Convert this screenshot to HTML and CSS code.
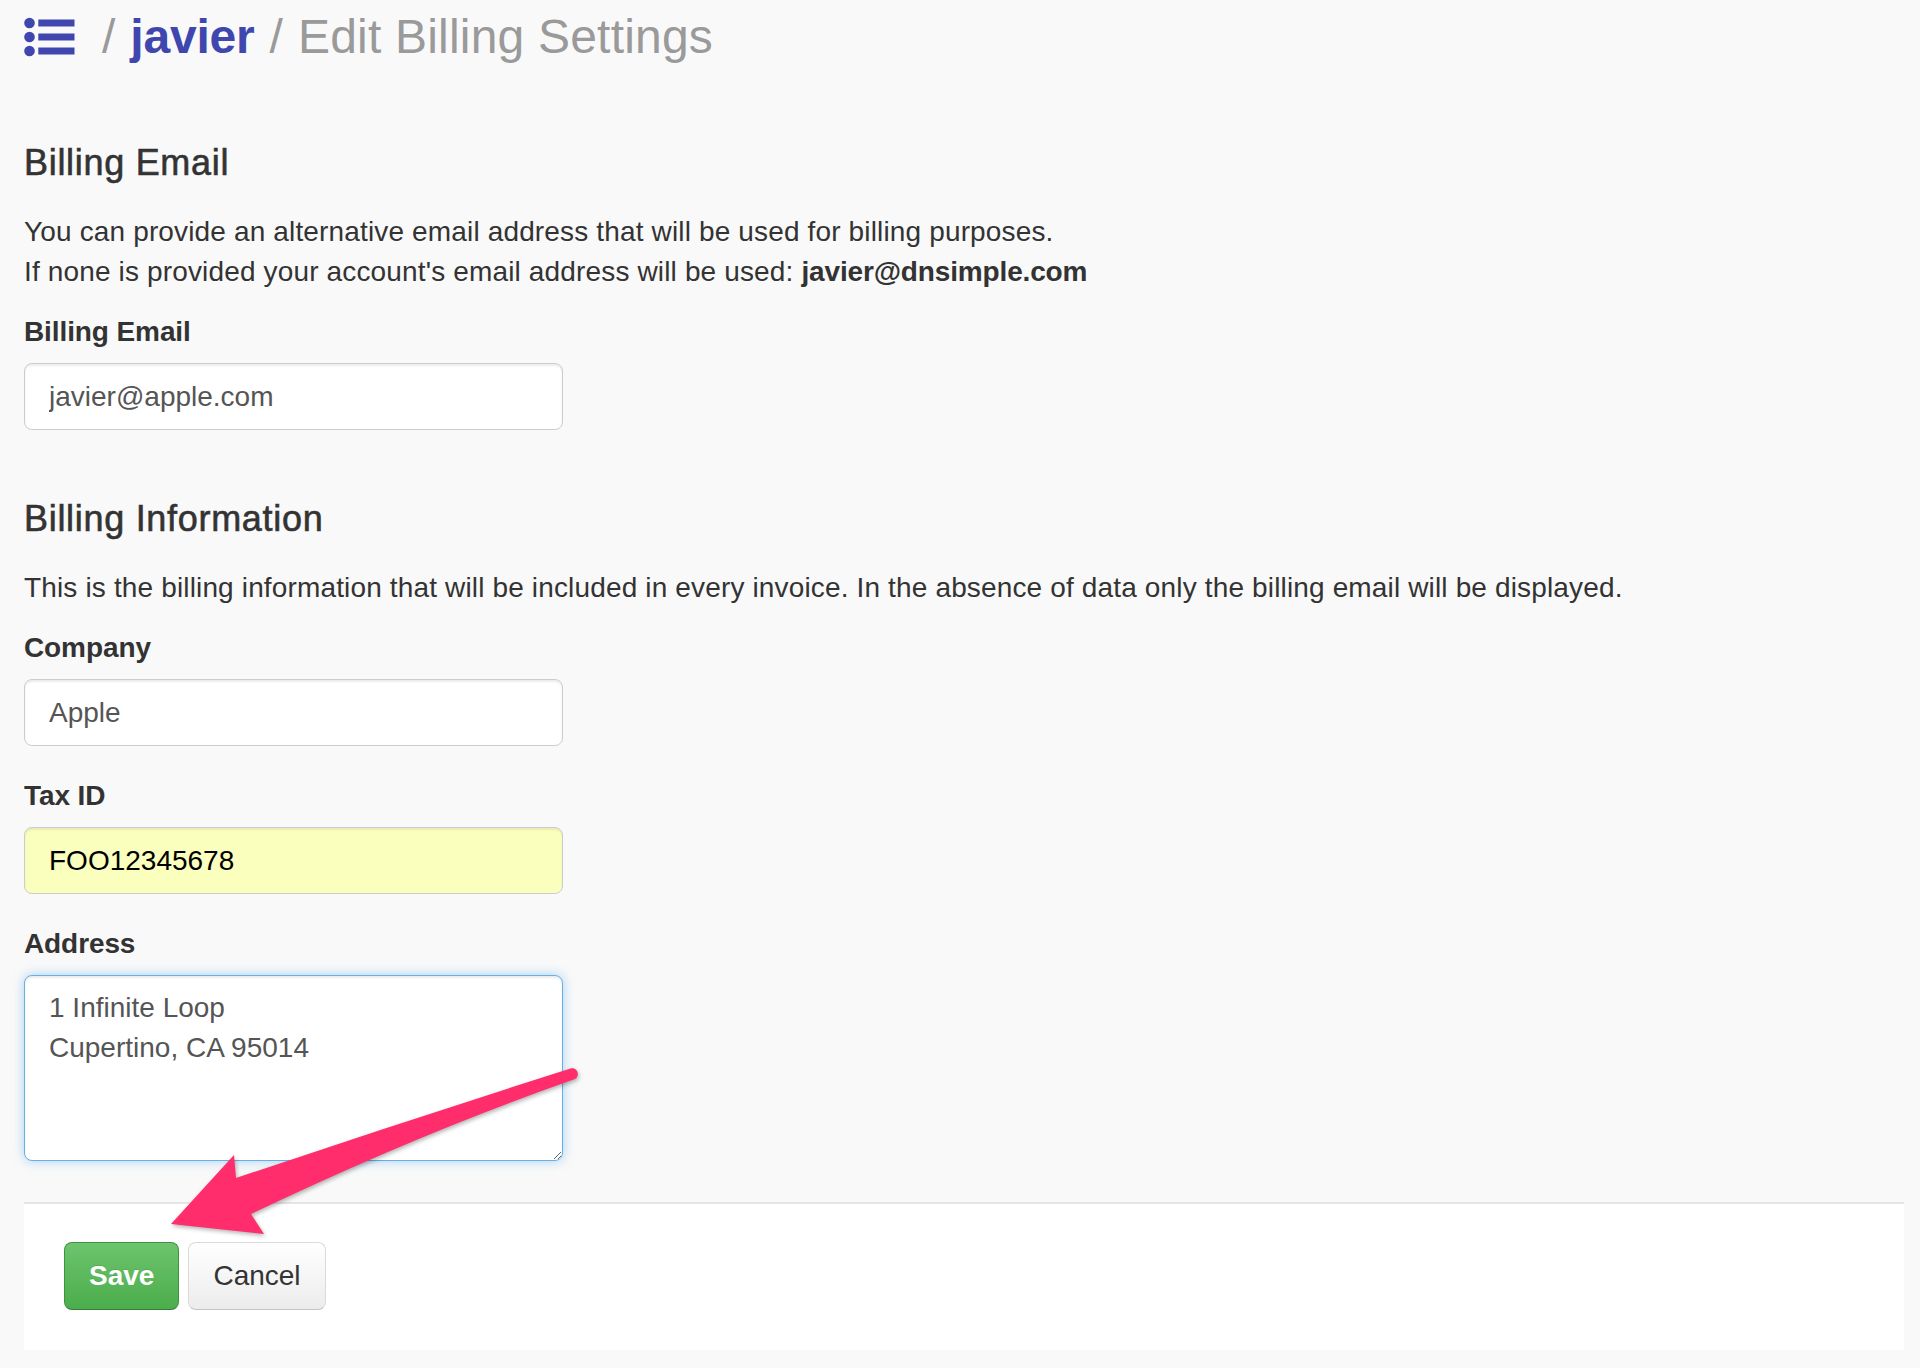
FILE: index.html
```html
<!DOCTYPE html>
<html lang="en">
<head>
<meta charset="utf-8">
<title>Edit Billing Settings</title>
<link rel="stylesheet" href="styles.css">
</head>
<body>
<div class="page">
  <header class="page-title">
    <svg class="list-icon" width="51" height="40" viewBox="0 0 51 40" aria-hidden="true">
      <circle cx="5.5" cy="6" r="5.3"/>
      <circle cx="5.5" cy="20" r="5.3"/>
      <circle cx="5.5" cy="34" r="5.3"/>
      <rect x="14.3" y="2.5" width="36.2" height="7"/>
      <rect x="14.3" y="16.5" width="36.2" height="7"/>
      <rect x="14.3" y="30.5" width="36.2" height="7"/>
    </svg>
    <span class="sep">/</span>
    <a class="crumb" href="#">javier</a>
    <span class="sep">/</span>
    <span class="current">Edit Billing Settings</span>
  </header>

  <form class="settings-form">
    <section class="section">
      <h3 class="section-title">Billing Email</h3>
      <p class="section-text">You can provide an alternative email address that will be used for billing purposes.<br>If none is provided your account's email address will be used: <strong class="account-email">javier@dnsimple.com</strong></p>
      <div class="form-group">
        <label class="form-label" for="billing-email">Billing Email</label>
        <input class="form-control" id="billing-email" type="text" value="javier@apple.com">
      </div>
    </section>

    <section class="section">
      <h3 class="section-title">Billing Information</h3>
      <p class="section-text">This is the billing information that will be included in every invoice. In the absence of data only the billing email will be displayed.</p>
      <div class="form-group">
        <label class="form-label" for="company">Company</label>
        <input class="form-control" id="company" type="text" value="Apple">
      </div>
      <div class="form-group">
        <label class="form-label" for="tax-id">Tax ID</label>
        <input class="form-control autofilled" id="tax-id" type="text" value="FOO12345678">
      </div>
      <div class="form-group last">
        <label class="form-label" for="address">Address</label>
        <textarea class="form-control textarea focused" id="address">1 Infinite Loop
Cupertino, CA 95014</textarea>
      </div>
    </section>

    <div class="form-actions">
      <button type="button" class="btn btn-success">Save</button>
      <button type="button" class="btn btn-default">Cancel</button>
    </div>
  </form>

  <svg class="annotation" width="1920" height="1368" viewBox="0 0 1920 1368" aria-hidden="true">
    <path d="M 569 1069 Q 402 1122 236 1178 L 234 1155 L 171 1224 L 264 1234 L 251 1214 Q 418 1134 575 1079 A 5 5 0 0 0 569 1069 Z"/>
  </svg>
</div>
</body>
</html>
```

FILE: styles.css
```css
html {
  background: #f9f9f9;
}

body {
  margin: 0;
  background: #f9f9f9;
  color: #333;
  font-family: "Liberation Sans", Arial, Helvetica, sans-serif;
  font-size: 28px;
  line-height: 40px;
}

.page {
  position: relative;
  padding: 0 16px 18px 24px;
}

/* Title / breadcrumb */
.page-title {
  display: flex;
  align-items: center;
  gap: 15px;
  padding-top: 9px;
  margin: 0 0 78px;
  font-size: 48px;
  line-height: 56px;
  color: #9a9a9a;
}

.list-icon {
  fill: #3f47ae;
  margin-right: 12px;
  flex: none;
}

.sep {
  color: #9a9a9a;
}

.crumb {
  color: #3f47ae;
  font-weight: bold;
  text-decoration: none;
  letter-spacing: -0.2px;
}

.current {
  color: #9a9a9a;
  letter-spacing: 0.2px;
}

/* Sections */
.settings-form {
  margin: 0;
}

.section {
  margin-bottom: 69px;
}

.section:last-of-type {
  margin-bottom: 0;
}

.section-title {
  margin: 0 0 29px;
  font-size: 36px;
  line-height: 40px;
  font-weight: normal;
  letter-spacing: 0.7px;
  color: #333;
  -webkit-text-stroke: 0.6px #333;
}

.section-text {
  margin: 0 0 20px;
  letter-spacing: 0.15px;
}

.account-email {
  letter-spacing: -0.15px;
}

.form-group {
  margin-bottom: 30px;
}

.form-group.last {
  margin-bottom: 0;
}

.form-label {
  display: block;
  font-weight: bold;
  margin-bottom: 11px;
  letter-spacing: -0.1px;
}

.form-control {
  display: block;
  box-sizing: border-box;
  width: 539px;
  height: 67px;
  margin: 0;
  padding: 12px 24px;
  border: 1px solid #ccc;
  border-radius: 8px;
  background: #fff;
  color: #555;
  font-family: inherit;
  font-size: 28px;
  line-height: 40px;
  box-shadow: inset 0 2px 2px rgba(0, 0, 0, 0.075);
  outline: none;
}

.form-control.autofilled {
  background: #faffbd;
  color: #000;
}

.form-control.textarea {
  height: 186px;
}

.form-control.focused {
  border-color: #66afe9;
  box-shadow: inset 0 2px 2px rgba(0, 0, 0, 0.075), 0 0 12px rgba(102, 175, 233, 0.55);
}

/* Actions */
.form-actions {
  display: flex;
  gap: 9px;
  margin-top: 41px;
  padding: 38px 40px 40px;
  background: #fff;
  border-top: 2px solid #e5e5e5;
}

.btn {
  box-sizing: border-box;
  height: 68px;
  padding: 13px 24px;
  border-radius: 8px;
  font-family: inherit;
  font-size: 28px;
  line-height: 40px;
  cursor: pointer;
}

.btn-success {
  color: #fff;
  font-weight: bold;
  background: linear-gradient(#6dc46d, #4bad4b);
  border: 1px solid #3f923f;
  border-bottom-color: #357d35;
  text-shadow: 0 -1px 0 rgba(0, 0, 0, 0.1);
}

.btn-default {
  color: #333;
  background: linear-gradient(#fff, #ececec);
  border: 1px solid #dadada;
  border-bottom-color: #c4c4c4;
}

/* Annotation arrow */
.annotation {
  position: absolute;
  top: 0;
  left: 0;
  pointer-events: none;
  fill: #ff2d6b;
  filter: drop-shadow(1px 2px 2px rgba(0, 0, 0, 0.3));
}
```
